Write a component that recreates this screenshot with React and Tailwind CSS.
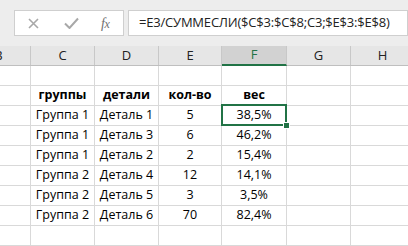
import React from "react";

const cols = [
  { key: "B", w: "w-[64px] -ml-[33px]" },
  { key: "C", w: "w-[64px]" },
  { key: "D", w: "w-[64px]" },
  { key: "E", w: "w-[63px]" },
  { key: "F", w: "w-[65px]" },
  { key: "G", w: "w-[64px]" },
  { key: "H", w: "w-[64px]" },
];

const rows = [
  ["", "", "", "", "", "", ""],
  ["", "группы", "детали", "кол-во", "вес", "", ""],
  ["", "Группа 1", "Деталь 1", "5", "38,5%", "", ""],
  ["", "Группа 1", "Деталь 3", "6", "46,2%", "", ""],
  ["", "Группа 1", "Деталь 2", "2", "15,4%", "", ""],
  ["", "Группа 2", "Деталь 4", "12", "14,1%", "", ""],
  ["", "Группа 2", "Деталь 5", "3", "3,5%", "", ""],
  ["", "Группа 2", "Деталь 6", "70", "82,4%", "", ""],
  ["", "", "", "", "", "", ""],
  ["", "", "", "", "", "", ""],
];

const App = () => {
  return (
    <div className="w-[408px] h-[246px] overflow-hidden bg-white relative font-['Open_Sans','Noto_Sans',sans-serif]">
      {/* Formula bar */}
      <div className="h-[46px] bg-[#ededed] pt-[10px] flex">
        <div className="ml-[14px] w-[110px] h-[26px] bg-white border border-[#cfcfcf] flex items-center">
          <svg className="ml-[13px]" width="11" height="11" viewBox="0 0 11 11">
            <path d="M1 1 L10 10 M10 1 L1 10" stroke="#a8a8a8" strokeWidth="1.6" fill="none" />
          </svg>
          <svg className="ml-[25px]" width="15" height="12" viewBox="0 0 15 12">
            <path d="M1 6.5 L5.5 11 L14 1.5" stroke="#a8a8a8" strokeWidth="2" fill="none" />
          </svg>
          <span className="ml-[22px] text-[14px] italic text-[#707070] font-['Liberation_Serif',serif] tracking-[-0.5px]">
            f<span className="text-[12px]">x</span>
          </span>
        </div>
        <div className="ml-[4px] flex-1 h-[26px] bg-white border border-[#cfcfcf] flex items-center pl-[10px] text-[13px] text-[#222] whitespace-nowrap tracking-[-0.2px]">
          =E3/СУММЕСЛИ($C$3:$C$8;C3;$E$3:$E$8)
        </div>
      </div>

      {/* Column headers */}
      <div className="flex h-[20px] bg-[#e6e6e6] border-b border-[#bfbfbf]">
        {cols.map((c) => (
          <div
            key={c.key}
            className={`${c.w} shrink-0 flex items-center justify-center text-[13px] border-r border-[#c8c8c8] ${
              c.key === "F"
                ? "bg-[#d2d2d2] text-[#217346] border-b-2 border-b-[#217346] -mb-[1px]"
                : "text-[#222]"
            }`}
          >
            {c.key}
          </div>
        ))}
      </div>

      {/* Cells */}
      <div className="relative font-['Open_Sans','Noto_Sans',sans-serif] text-[12.5px] text-black">
        {rows.map((r, i) => (
          <div key={i} className="flex h-[20px] border-b border-[#d9d9d9]">
            {cols.map((c, j) => (
              <div
                key={c.key}
                className={`${c.w} shrink-0 flex items-center justify-center border-r border-[#d9d9d9] whitespace-nowrap ${
                  i === 1 ? "font-bold" : ""
                }`}
              >
                {r[j]}
              </div>
            ))}
          </div>
        ))}

        {/* Active cell F3 */}
        <div className="absolute left-[221px] top-[38px] w-[66px] h-[22px] border-2 border-[#217346]" />
        <div className="absolute left-[283px] top-[56px] w-[7px] h-[7px] bg-[#217346] border border-white" />
      </div>
    </div>
  );
};

export default App;
